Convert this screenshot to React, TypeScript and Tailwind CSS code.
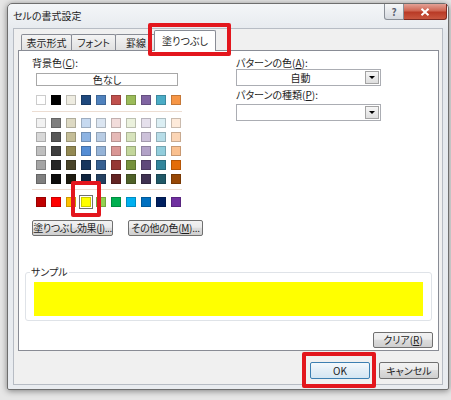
import React from 'react'

const themeRow = ['#ffffff', '#000000', '#eeece1', '#1f497d', '#4f81bd', '#c0504d', '#9bbb59', '#8064a2', '#4bacc6', '#f79646']

const tintRows = [
  ['#f2f2f2', '#7f7f7f', '#ddd9c3', '#c6d9f0', '#dbe5f1', '#f2dcdb', '#ebf1dd', '#e5e0ec', '#dbeef3', '#fdeada'],
  ['#d8d8d8', '#595959', '#c4bd97', '#8db3e2', '#b8cce4', '#e5b9b7', '#d7e3bc', '#ccc1d9', '#b7dde8', '#fbd5b5'],
  ['#bfbfbf', '#3f3f3f', '#938953', '#548dd4', '#95b3d7', '#d99694', '#c3d69b', '#b2a2c7', '#92cddc', '#fac08f'],
  ['#a5a5a5', '#262626', '#494429', '#17365d', '#366092', '#953734', '#76923c', '#5f497a', '#31859b', '#e36c09'],
  ['#7f7f7f', '#0c0c0c', '#1d1b10', '#0f243e', '#244061', '#632423', '#4f6128', '#3f3151', '#205867', '#974806'],
]

const standardRow = ['#c00000', '#ff0000', '#ffc000', '#ffff00', '#92d050', '#00b050', '#00b0f0', '#0070c0', '#002060', '#7030a0']

// selected swatch gets a white + grey ring like Office
function Swatch({ color, selected }: { color: string; selected?: boolean }) {
  return (
    <div
      className={
        selected
          ? 'w-[10px] h-[10px] border border-black/20 shadow-[0_0_0_1px_#ffffff,0_0_0_2px_#707070]'
          : 'w-[10px] h-[10px] border border-black/20'
      }
      style={{ backgroundColor: color }}
    />
  )
}

function SwatchRow({ colors, selectedIndex }: { colors: string[]; selectedIndex?: number }) {
  return (
    <div className="flex gap-[5px]">
      {colors.map((c, i) => (
        <Swatch key={i} color={c} selected={i === selectedIndex} />
      ))}
    </div>
  )
}

function WinButton({ children, className = '' }: { children: React.ReactNode; className?: string }) {
  return (
    <div
      className={`flex items-center justify-center h-[16px] whitespace-nowrap rounded-[2px] border border-[#707070] bg-[linear-gradient(#f2f2f2,#ebebeb_45%,#dddddd_50%,#cfcfcf)] text-[10px] leading-none text-[#1e1e1e] ${className}`}
    >
      {children}
    </div>
  )
}

function Combo({ value }: { value?: string }) {
  return (
    <div className="flex h-[17px] w-[145px] border border-[#abadb3] bg-white">
      <div className="flex-1 flex items-center justify-center text-[10px] leading-none">{value}</div>
      <div className="w-[14px] m-px flex items-center justify-center border border-[#a3a3a3] bg-[linear-gradient(#f6f6f6,#dedede)]">
        <div className="w-0 h-0 border-x-[3px] border-x-transparent border-t-[3px] border-t-black" />
      </div>
    </div>
  )
}

function Tab({ label, className = '' }: { label: string; className?: string }) {
  return (
    <div
      className={`h-[16px] -ml-px flex items-center justify-center border border-b-0 border-[#898c95] rounded-t-[2px] bg-[linear-gradient(#f4f4f4,#e1e1e1)] text-[10px] leading-none ${className}`}
    >
      {label}
    </div>
  )
}

export default function App() {
  return (
    <div className="relative w-[451px] h-[400px] overflow-hidden bg-[#e6e6e6] pt-[3px] pl-[7px] text-[#1e1e1e] [font-family:'Noto_Sans_CJK_JP','Noto_Sans',sans-serif] [font-feature-settings:'palt']">
      {/* dialog window */}
      <div className="w-[442px] h-[387px] flex flex-col rounded-t-[5px] rounded-b-[2px] border border-[#6e6e6e] bg-[linear-gradient(#f4f6f8,#e4e8ed_30px,#e9ecf0)] shadow-[0_1px_6px_rgba(0,0,0,0.45)]">
        {/* title bar */}
        <div className="h-[24px] flex items-start">
          <div className="pl-[5px] pt-[6px] text-[10px] leading-[12px]">セルの書式設定</div>
          <div className="ml-auto mr-px flex">
            <div className="w-[20px] h-[16px] flex items-center justify-center border border-t-0 border-[#8a8f97] rounded-bl-[3px] bg-[linear-gradient(#f6f7f8,#d6dae0)] text-[10px] leading-none text-[#5b6270] font-bold">
              ?
            </div>
            <div className="w-[43px] h-[16px] flex items-center justify-center border border-t-0 border-l-0 border-[#7d2a22] rounded-br-[3px] bg-[linear-gradient(#e3a196,#cf6552_45%,#b93a26_55%,#c9563f)]">
              <svg width="10" height="8" viewBox="0 0 10 8">
                <path d="M1.5 0.8 L8.5 7.2 M8.5 0.8 L1.5 7.2" stroke="#ffffff" strokeWidth="2" />
              </svg>
            </div>
          </div>
        </div>

        {/* client area */}
        <div className="flex-1 mx-[5px] mb-[4px] border border-[#b7bcc4] bg-[#f0f0f0] pl-[4px] pr-[3px] flex flex-col">
          {/* tabs */}
          <div className="h-[21px] flex items-end pl-[4px]">
            <Tab label="表示形式" className="w-[51px]" />
            <Tab label="フォント" className="w-[45px]" />
            <Tab label="罫線" className="w-[42px]" />
            <div className="relative z-10 -ml-[3px] -mb-px h-[21px] w-[62px] flex items-center justify-center border border-b-0 border-[#898c95] rounded-t-[2px] bg-white text-[10px] leading-none">
              塗りつぶし
            </div>
          </div>

          {/* tab panel */}
          <div className="h-[301px] border border-[#898c95] bg-white flex flex-col">
            <div className="h-[185px] pt-[6px] pl-[13px] flex">
              {/* left column */}
              <div className="w-[150px] flex flex-col">
                <div className="h-[12px] text-[10px] leading-[12px]">
                  背景色(<span className="underline">C</span>):
                </div>
                <div className="mt-[4px] ml-[4px] w-[142px] h-[13px] border border-[#a8a8a8] flex items-center justify-center text-[10px] leading-none">
                  色なし
                </div>
                <div className="mt-[9px] ml-[4px]">
                  <SwatchRow colors={themeRow} />
                </div>
                <div className="mt-[6px] h-px w-[150px] bg-[#ecddd2]" />
                <div className="mt-[6px] ml-[4px] flex flex-col gap-[4px]">
                  {tintRows.map((row, i) => (
                    <SwatchRow key={i} colors={row} />
                  ))}
                </div>
                <div className="mt-[5px] h-px w-[150px] bg-[#ecddd2]" />
                <div className="mt-[7px] ml-[4px]">
                  <SwatchRow colors={standardRow} selectedIndex={3} />
                </div>
                <div className="mt-[13px] flex gap-[15px]">
                  <WinButton className="w-[81px] shrink-0 tracking-[-0.4px]">
                    塗りつぶし効果(<span className="underline">I</span>)...
                  </WinButton>
                  <WinButton className="w-[75px] shrink-0 tracking-[-0.3px]">
                    その他の色(<span className="underline">M</span>)...
                  </WinButton>
                </div>
              </div>

              {/* right column */}
              <div className="ml-[54px] flex flex-col">
                <div className="h-[12px] text-[10px] leading-[12px]">
                  パターンの色(<span className="underline">A</span>):
                </div>
                <Combo value="自動" />
                <div className="mt-[3px] h-[12px] text-[10px] leading-[12px]">
                  パターンの種類(<span className="underline">P</span>):
                </div>
                <div className="mt-[3px]">
                  <Combo />
                </div>
              </div>
            </div>

            {/* sample group */}
            <fieldset className="mt-[30px] mx-[6px] rounded-[3px] border border-[#dfe3e8] px-[8px] pb-[4px]">
              <legend className="ml-[-4px] px-px text-[10px] leading-[12px]">サンプル</legend>
              <div className="mt-[4px] h-[34px] bg-[#ffff00]" />
            </fieldset>

            <div className="mt-[11px] mr-[5px] flex justify-end">
              <WinButton className="w-[60px]">
                クリア(<span className="underline">R</span>)
              </WinButton>
            </div>
          </div>

          {/* dialog buttons */}
          <div className="mt-[11px] flex justify-end gap-[9px]">
            <div className="w-[60px] h-[17px] flex items-center justify-center rounded-[2px] border border-[#3c7fb1] bg-[linear-gradient(#f4f9fc,#e3eef6_50%,#d4e6f3)] text-[10px] leading-none">
              OK
            </div>
            <WinButton className="w-[60px] h-[17px]">キャンセル</WinButton>
          </div>
        </div>
      </div>

      {/* red highlight boxes */}
      <div className="absolute left-[148px] top-[23px] w-[83px] h-[33px] border-[4px] border-[#e3161d] rounded-[2px]" />
      <div className="absolute left-[71px] top-[181px] w-[30px] h-[36px] border-[4px] border-[#e3161d] rounded-[2px]" />
      <div className="absolute left-[302px] top-[352px] w-[74px] h-[36px] border-[4px] border-[#e3161d] rounded-[2px]" />
    </div>
  )
}
